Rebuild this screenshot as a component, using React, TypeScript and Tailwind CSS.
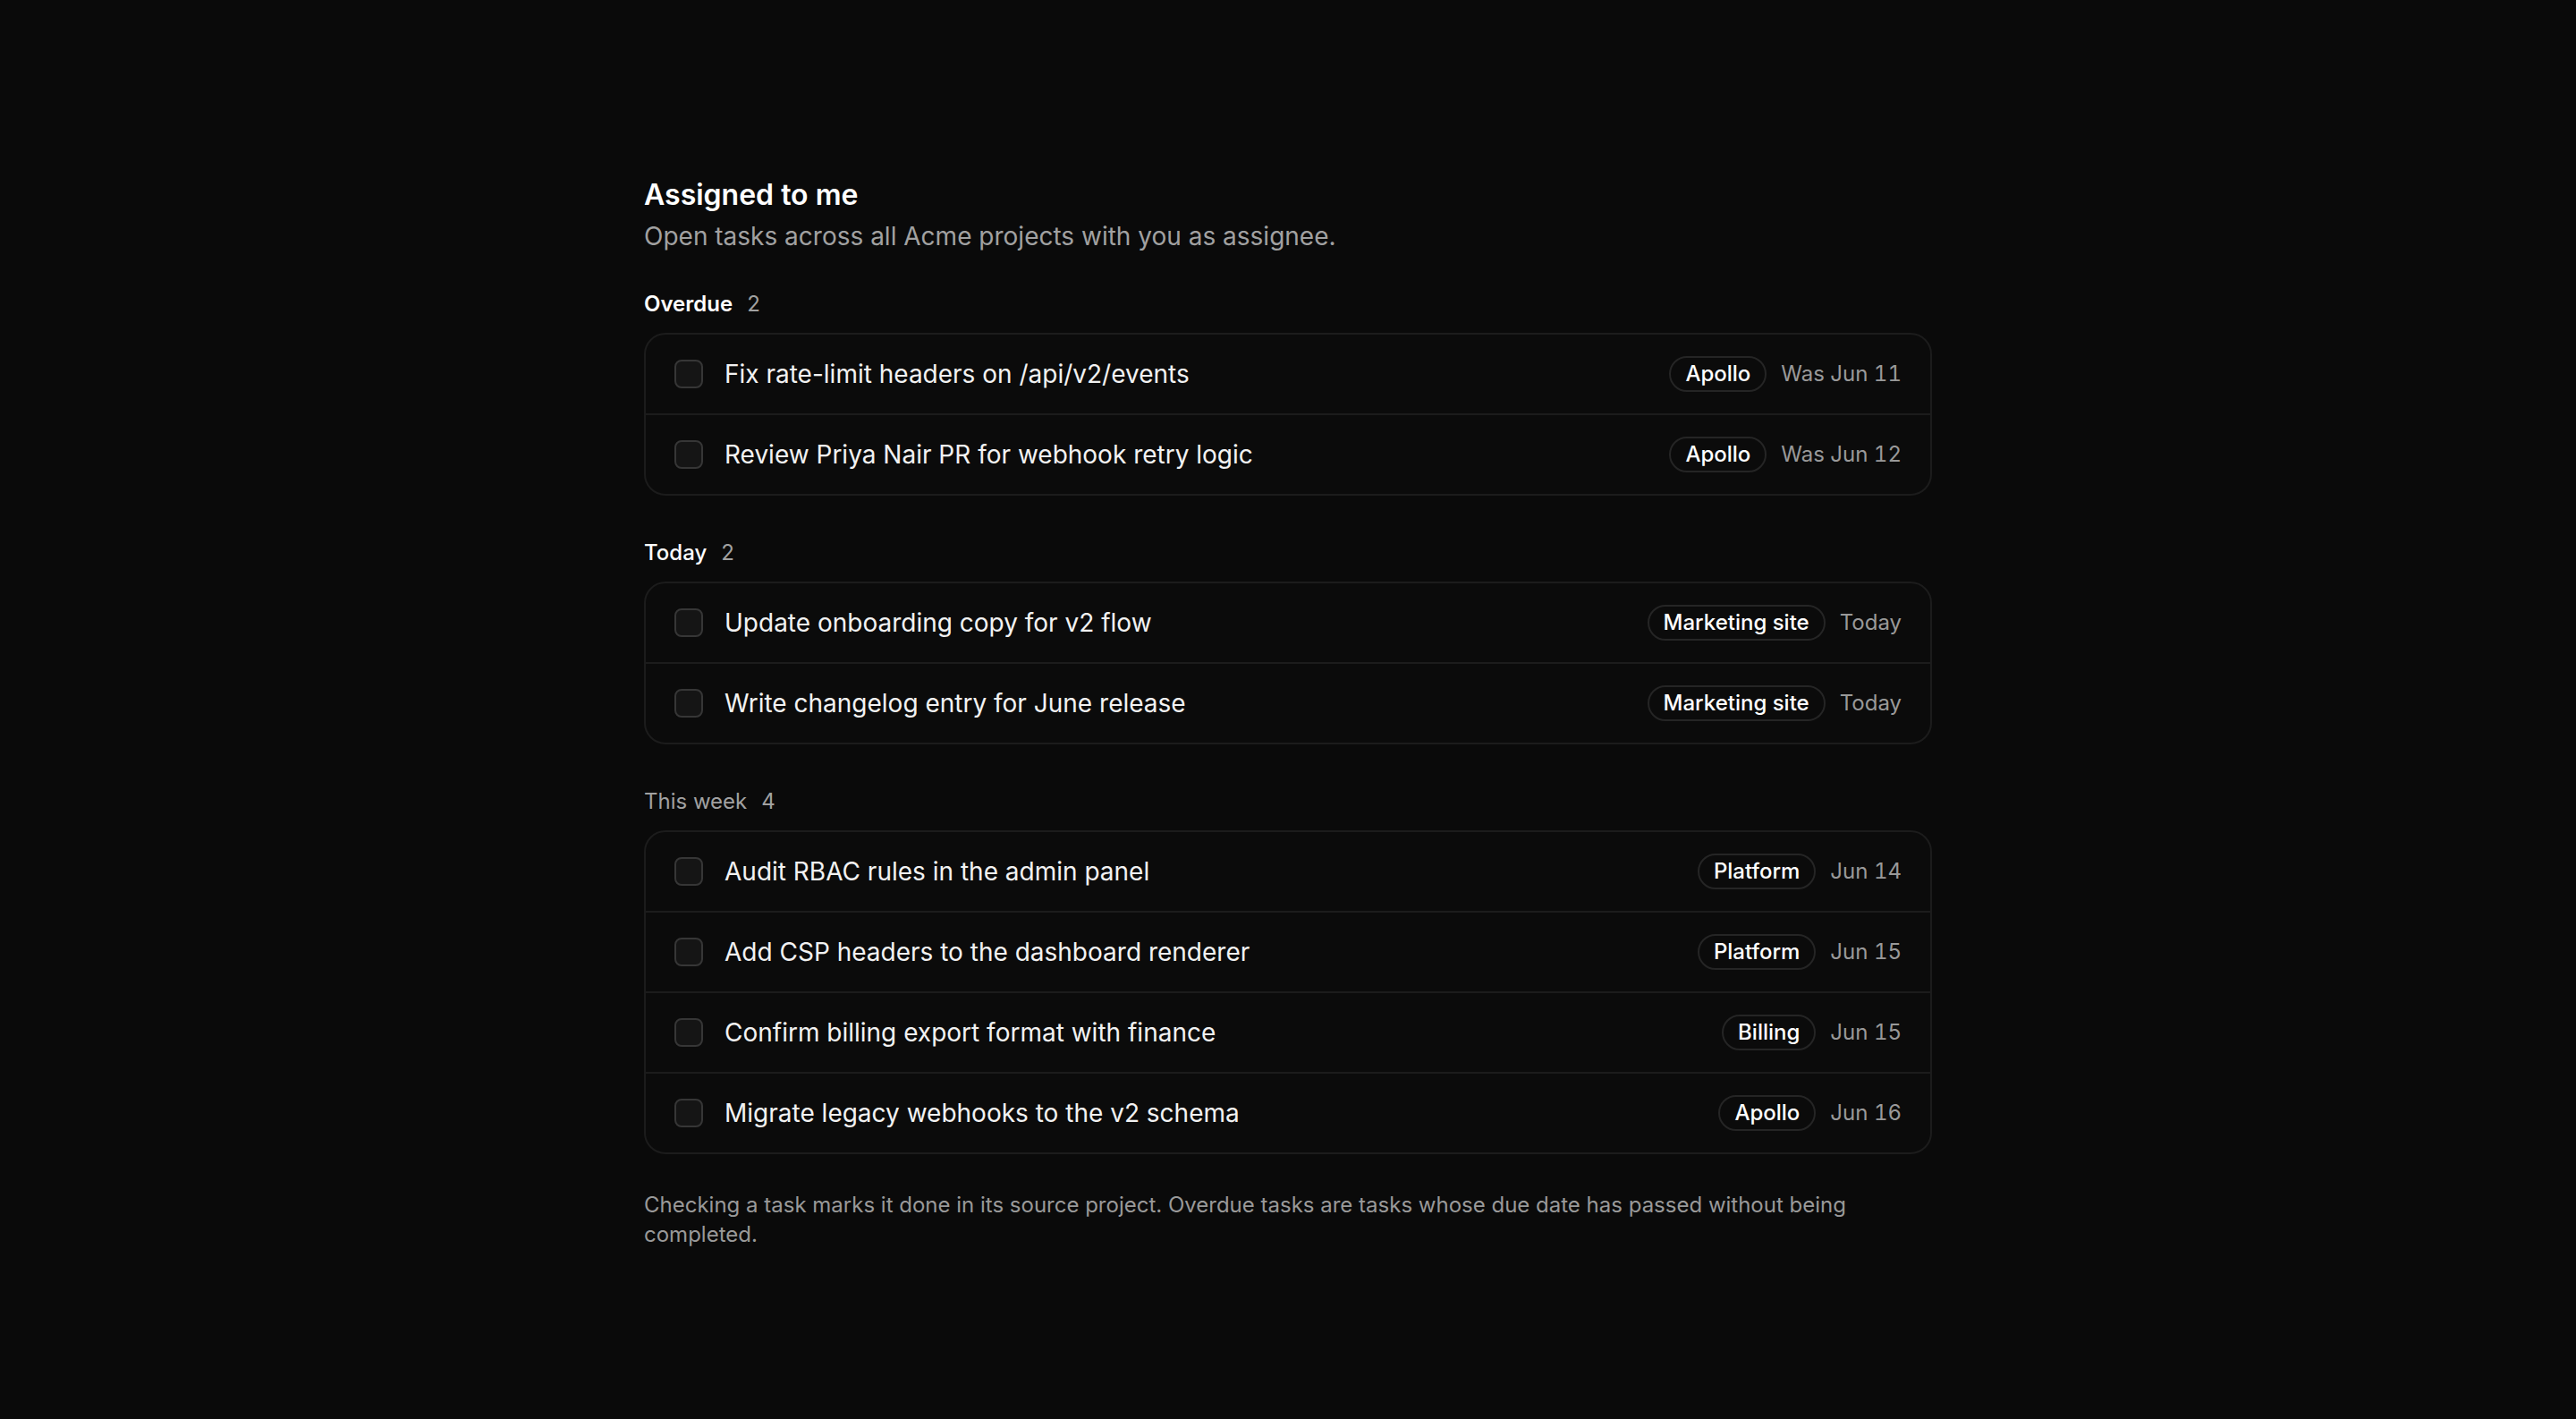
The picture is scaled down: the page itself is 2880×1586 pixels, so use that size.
import React from 'react';

type Task = {
  title: string;
  project: string;
  due: string;
};

type Group = {
  label: string;
  tone: 'strong' | 'medium' | 'muted';
  tasks: Task[];
};

const groups: Group[] = [
  {
    label: 'Overdue',
    tone: 'strong',
    tasks: [
      { title: 'Fix rate-limit headers on /api/v2/events', project: 'Apollo', due: 'Was Jun 11' },
      { title: 'Review Priya Nair PR for webhook retry logic', project: 'Apollo', due: 'Was Jun 12' },
    ],
  },
  {
    label: 'Today',
    tone: 'medium',
    tasks: [
      { title: 'Update onboarding copy for v2 flow', project: 'Marketing site', due: 'Today' },
      { title: 'Write changelog entry for June release', project: 'Marketing site', due: 'Today' },
    ],
  },
  {
    label: 'This week',
    tone: 'muted',
    tasks: [
      { title: 'Audit RBAC rules in the admin panel', project: 'Platform', due: 'Jun 14' },
      { title: 'Add CSP headers to the dashboard renderer', project: 'Platform', due: 'Jun 15' },
      { title: 'Confirm billing export format with finance', project: 'Billing', due: 'Jun 15' },
      { title: 'Migrate legacy webhooks to the v2 schema', project: 'Apollo', due: 'Jun 16' },
    ],
  },
];

const labelTone = {
  strong: 'font-semibold text-white',
  medium: 'font-medium text-white',
  muted: 'font-normal text-[#a1a1a1]',
};

const TaskRow = ({ task }: { task: Task }) => (
  <li className="flex items-center gap-[24px] border-b-2 border-[#1c1c1c] px-[32px] py-[24px] last:border-b-0">
    <span className="h-[32px] w-[32px] shrink-0 rounded-[8px] border-2 border-[#363636] bg-[#151515]" />
    <span className="flex-1 truncate text-[28px] leading-[40px] text-[#f2f2f2]">{task.title}</span>
    <div className="flex items-center gap-[16px]">
      <span className="inline-flex h-[40px] items-center rounded-full border-2 border-[#252525] px-[16px] text-[24px] font-medium text-white">
        {task.project}
      </span>
      <span className="text-[24px] leading-[40px] tabular-nums text-[#999999]">{task.due}</span>
    </div>
  </li>
);

const App = () => {
  return (
    <div
      className="min-h-screen bg-[#0a0a0a] antialiased"
      style={{ fontFamily: 'Inter, "Noto Sans", sans-serif' }}
    >
      <div className="mx-auto max-w-[1440px] pt-[194px] pb-[128px]">
        <h1 className="text-[32px] leading-[48px] font-semibold text-white">Assigned to me</h1>
        <p className="mt-[2px] text-[28px] leading-[40px] text-[#a1a1a1]">
          Open tasks across all Acme projects with you as assignee.
        </p>

        <div className="mt-[40px] space-y-[48px]">
          {groups.map((group) => (
            <section key={group.label}>
              <div className="mb-[16px] flex items-center gap-[16px] text-[24px] leading-[32px]">
                <span className={labelTone[group.tone]}>{group.label}</span>
                <span className="text-[#a1a1a1]">{group.tasks.length}</span>
              </div>
              <ul className="overflow-hidden rounded-[24px] border-2 border-[#1c1c1c] bg-[#0b0b0b]">
                {group.tasks.map((task) => (
                  <TaskRow key={task.title} task={task} />
                ))}
              </ul>
            </section>
          ))}
        </div>

        <p className="mt-[40px] text-[24px] leading-[33px] text-[#999999]">
          Checking a task marks it done in its source project. Overdue tasks are tasks whose due date
          has passed without being completed.
        </p>
      </div>
    </div>
  );
};

export default App;
